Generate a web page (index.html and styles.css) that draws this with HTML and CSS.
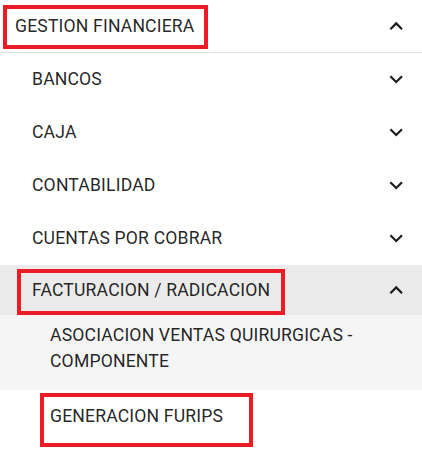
FILE: index.html
```html
<!DOCTYPE html>
<html lang="es">

<head>
    <meta charset="UTF-8">
    <meta name="viewport" content="width=device-width, initial-scale=1.0">
    <title>Menu</title>
    <link rel="stylesheet" href="styles.css">
</head>

<body>
    <nav class="menu">
        <div class="item header">
            <span class="label">GESTION FINANCIERA</span>
            <svg class="icon" viewBox="0 0 24 24"><path d="M12 8l-6 6 1.41 1.41L12 10.83l4.59 4.58L18 14z"/></svg>
            <span class="mark mark-head"></span>
        </div>
        <div class="item level1">
            <span class="label">BANCOS</span>
            <svg class="icon" viewBox="0 0 24 24"><path d="M16.59 8.59 12 13.17 7.41 8.59 6 10l6 6 6-6z"/></svg>
        </div>
        <div class="item level1">
            <span class="label">CAJA</span>
            <svg class="icon" viewBox="0 0 24 24"><path d="M16.59 8.59 12 13.17 7.41 8.59 6 10l6 6 6-6z"/></svg>
        </div>
        <div class="item level1">
            <span class="label">CONTABILIDAD</span>
            <svg class="icon" viewBox="0 0 24 24"><path d="M16.59 8.59 12 13.17 7.41 8.59 6 10l6 6 6-6z"/></svg>
        </div>
        <div class="item level1">
            <span class="label">CUENTAS POR COBRAR</span>
            <svg class="icon" viewBox="0 0 24 24"><path d="M16.59 8.59 12 13.17 7.41 8.59 6 10l6 6 6-6z"/></svg>
        </div>
        <div class="item level1 open">
            <span class="label">FACTURACION / RADICACION</span>
            <svg class="icon" viewBox="0 0 24 24"><path d="M12 8l-6 6 1.41 1.41L12 10.83l4.59 4.58L18 14z"/></svg>
            <span class="mark mark-fact"></span>
        </div>
        <div class="item level2 multi selected">
            <span class="label">ASOCIACION VENTAS QUIRURGICAS - COMPONENTE</span>
        </div>
        <div class="item level2">
            <span class="label">GENERACION FURIPS</span>
            <span class="mark mark-furips"></span>
        </div>
    </nav>
</body>

</html>
```

FILE: styles.css
```css
body {
    margin: 0;
    min-height: 458px;
    background-color: #fff;
    font-family: 'Roboto', 'Liberation Sans', sans-serif;
    font-size: 17.6px;
    letter-spacing: 0.00938em;
    color: rgba(0, 0, 0, 0.87);
}

.menu {
    width: 422px;
}

.item {
    position: relative;
    display: flex;
    align-items: center;
    height: 53px;
    padding: 0 13px 0 15px;
    box-sizing: border-box;
}

.label {
    flex: 1;
    line-height: 26.4px;
}

.icon {
    width: 26.4px;
    height: 26.4px;
    fill: #1c1c1c;
    flex-shrink: 0;
}

.header {
    height: 53px;
    border-bottom: 1px solid #e0e0e0;
}

.level1 {
    padding-left: 32px;
}

.level2 {
    padding-left: 50px;
    height: 52px;
}

.open {
    height: 50px;
    background-color: #ebebeb;
}

.selected {
    background-color: #f5f5f5;
}

.multi {
    align-items: flex-start;
    height: 75px;
    padding-top: 7px;
    padding-right: 40px;
}

/* red annotation frames */
.mark {
    position: absolute;
    border: 4px solid #ed1c24;
    box-sizing: border-box;
    pointer-events: none;
}

.mark-head {
    left: 3px;
    top: 5px;
    width: 205px;
    height: 44px;
}

.mark-fact {
    left: 17px;
    top: 4px;
    width: 268px;
    height: 46px;
}

.mark-furips {
    left: 40px;
    top: 3px;
    width: 213px;
    height: 54px;
}
```
